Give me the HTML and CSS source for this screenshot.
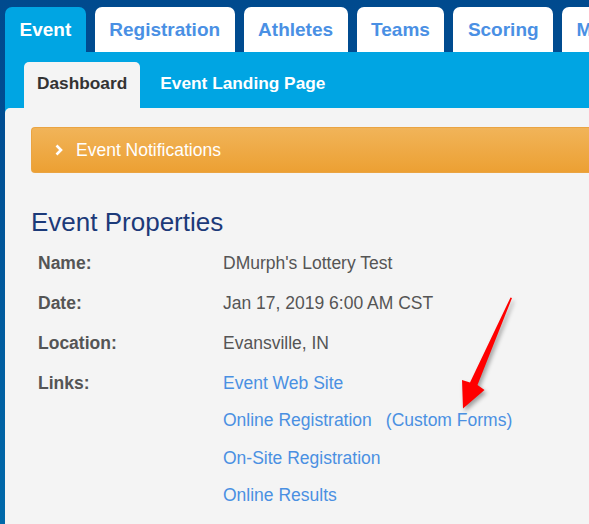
FILE: index.html
```html
<!DOCTYPE html>
<html>
<head>
<meta charset="utf-8">
<link rel="stylesheet" href="styles.css">
</head>
<body>
<div class="page">
  <nav class="top-tabs">
    <a class="tab active">Event</a>
    <a class="tab">Registration</a>
    <a class="tab">Athletes</a>
    <a class="tab">Teams</a>
    <a class="tab">Scoring</a>
    <a class="tab">Messages</a>
  </nav>
  <div class="event-area">
    <nav class="sub-tabs">
      <a class="sub-tab active">Dashboard</a>
      <a class="sub-tab">Event Landing Page</a>
    </nav>
    <section class="panel">
      <div class="notice">
        <svg class="chev" width="8" height="12" viewBox="0 0 8 12"><polyline points="1.5,1.5 6,6 1.5,10.5" fill="none" stroke="#fff" stroke-width="2.6" stroke-linejoin="miter"/></svg>
        <span>Event Notifications</span>
      </div>
      <h2 class="heading">Event Properties</h2>
      <div class="props">
        <div class="label">Name:</div>
        <div class="value">DMurph's Lottery Test</div>
        <div class="label">Date:</div>
        <div class="value">Jan 17, 2019 6:00 AM CST</div>
        <div class="label">Location:</div>
        <div class="value">Evansville, IN</div>
        <div class="label">Links:</div>
        <div class="value links">
          <a class="link">Event Web Site</a>
          <div class="link-row"><a class="link">Online Registration</a><a class="link">(Custom Forms)</a></div>
          <a class="link">On-Site Registration</a>
          <a class="link">Online Results</a>
        </div>
      </div>
    </section>
  </div>
  <svg class="arrow" width="589" height="524" viewBox="0 0 589 524">
    <polygon points="512,298 477.5,385 484.5,390 463,408.5 462,380 470,382.5 510.5,297.5" fill="#ff0000"/>
  </svg>
</div>
</body>
</html>
```
FILE: styles.css
```css
html, body {
  margin: 0;
  padding: 0;
  overflow: hidden;
}
body {
  width: 589px;
  height: 524px;
  background: linear-gradient(to bottom, #004a8e 0px, #004d92 120px, #0069aa 524px);
  font-family: "Liberation Sans", Arial, sans-serif;
}
.page {
  position: relative;
  width: 589px;
  height: 524px;
}
.top-tabs {
  display: flex;
  gap: 9px;
  padding: 7px 0 0 5px;
  white-space: nowrap;
}
.tab {
  flex-shrink: 0;
  height: 45px;
  line-height: 45px;
  padding: 0 14.5px;
  border-radius: 7px 7px 0 0;
  background: #fff;
  color: #4a90e4;
  font-size: 19px;
  font-weight: bold;
}
.tab.active {
  background: #00a5e3;
  color: #fff;
}
.event-area {
  margin-left: 5px;
  background: #00a5e3;
}
.sub-tabs {
  display: flex;
  gap: 7px;
  padding: 10px 0 0 19px;
  white-space: nowrap;
}
.sub-tab {
  height: 46px;
  line-height: 42px;
  padding: 0 13px;
  border-radius: 5px 5px 0 0;
  color: #fff;
  font-size: 17.3px;
  font-weight: bold;
}
.sub-tab.active {
  background: #f4f4f4;
  color: #333;
}
.panel {
  background: #f4f4f4;
  border-top-left-radius: 5px;
  padding: 19px 0 0 26px;
  height: 416px;
}
.notice {
  display: flex;
  align-items: center;
  gap: 13px;
  height: 46px;
  box-sizing: border-box;
  padding-left: 23px;
  border-radius: 4px 0 0 4px;
  border: 1px solid #eaa442;
  border-right: 0;
  background: linear-gradient(to bottom, #f1b459, #eca033);
  color: #fff;
  font-size: 17.5px;
  white-space: nowrap;
}
.chev {
  display: block;
}
.heading {
  margin: 34px 0 0 0;
  font-size: 26px;
  line-height: 30px;
  font-weight: normal;
  color: #1c3a79;
}
.props {
  display: grid;
  grid-template-columns: 185px 1fr;
  row-gap: 20px;
  margin: 16px 0 0 7px;
  font-size: 17.5px;
  line-height: 20px;
  color: #555;
}
.label {
  font-weight: bold;
}
.links {
  display: flex;
  flex-direction: column;
  align-items: flex-start;
  gap: 17.3px;
}
.link {
  color: #4a90e2;
}
.link-row {
  display: flex;
  gap: 14px;
}
.arrow {
  position: absolute;
  left: 0;
  top: 0;
  filter: drop-shadow(2px 3px 2px rgba(0, 0, 0, 0.35));
}
```
